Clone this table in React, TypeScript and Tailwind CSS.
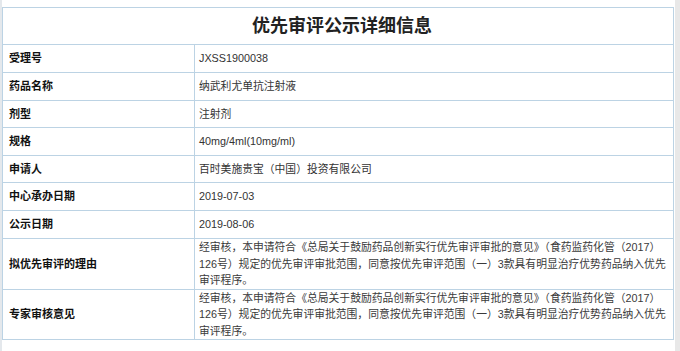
const rows: { label: string; value: React.ReactNode; h: string; long?: boolean }[] = [
  { label: "受理号", value: "JXSS1900038", h: "h-[28px]" },
  { label: "药品名称", value: "纳武利尤单抗注射液", h: "h-[28px]" },
  { label: "剂型", value: "注射剂", h: "h-[27px]" },
  { label: "规格", value: "40mg/4ml(10mg/ml)", h: "h-[28px]" },
  { label: "申请人", value: "百时美施贵宝（中国）投资有限公司", h: "h-[27px]" },
  { label: "中心承办日期", value: "2019-07-03", h: "h-[28px]" },
  { label: "公示日期", value: "2019-08-06", h: "h-[28px]" },
];

const reason = (
  <>
    经审核，本申请符合《总局关于鼓励药品创新实行优先审评审批的意见》（食药监药化管（2017）
    <br />
    126号）规定的优先审评审批范围，同意按优先审评范围（一）3款具有明显治疗优势药品纳入优先
    <br />
    审评程序。
  </>
);

function Row({ label, value, h, long }: { label: string; value: React.ReactNode; h: string; long?: boolean }) {
  return (
    <div className={`flex ${h} border-b border-[#bcd3e4]`}>
      <div className="flex w-[192px] shrink-0 items-center border-r border-[#bcd3e4] pl-[6px] text-[11px] font-bold text-[#111]">
        {label}
      </div>
      <div
        className={
          long
            ? "flex items-center whitespace-nowrap pl-[4px] text-[10.8px] leading-[16.5px] text-[#3a3a3a]"
            : "flex items-center whitespace-nowrap pl-[4px] text-[10.8px] text-[#333]"
        }
      >
        {long ? <div>{value}</div> : value}
      </div>
    </div>
  );
}

export default function App() {
  return (
    <div
      className="flex h-[351px] w-[680px] overflow-hidden bg-white"
      style={{ fontFamily: '"Liberation Sans", "Noto Sans CJK SC", sans-serif' }}
    >
      <div className="w-[2px] shrink-0 bg-[#e4e8ec]" />
      <div className="w-[672px] shrink-0 pt-[7px]">
        <div className="border-x border-[#bcd3e4]">
          <div className="flex h-[38px] items-center justify-center border-y border-[#bcd3e4] pl-[8px] text-[18px] font-bold text-[#222]">
            优先审评公示详细信息
          </div>
          {rows.map((r) => (
            <Row key={r.label} {...r} />
          ))}
          <Row label="拟优先审评的理由" value={reason} h="h-[51px]" long />
          <Row label="专家审核意见" value={reason} h="h-[50px]" long />
        </div>
      </div>
      <div className="w-[1px] shrink-0" />
      <div className="flex-1 bg-[#e8e8e8]" />
    </div>
  );
}
